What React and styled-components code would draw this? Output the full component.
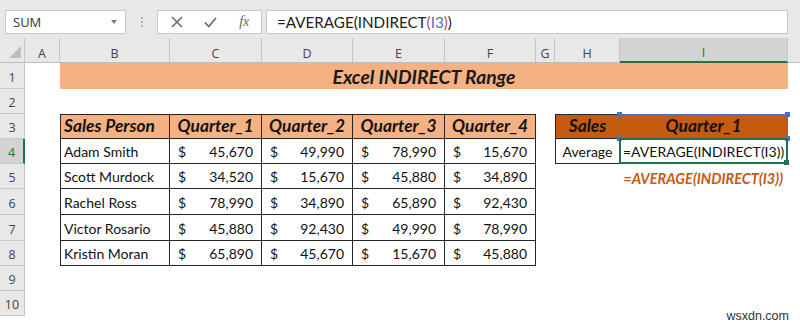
import React from "react";
import styled, { createGlobalStyle } from "styled-components";

const GlobalStyle = createGlobalStyle`
  html, body { margin: 0; padding: 0; background: #ffffff; }
  body { width: 800px; height: 327px; overflow: hidden; font-family: "Open Sans", "Noto Sans", sans-serif; }
  * { box-sizing: border-box; }
`;

const COLS = [25, 35, 110, 92, 91, 92, 91, 19, 65, 168];
const COL_NAMES = ["A", "B", "C", "D", "E", "F", "G", "H", "I"];
const ROWS = [25, 26, 25, 25, 25, 25, 26, 26, 25, 25, 25];

const Page = styled.div`
  position: relative;
  width: 800px;
  height: 327px;
  background: #e8e8e8;
  display: flex;
  flex-direction: column;
`;

const Toolbar = styled.div`
  height: 38px;
  display: flex;
  align-items: flex-start;
  padding: 10px 12px 0 5px;
  background: #e8e8e8;
`;

const Box = styled.div`
  height: 24px;
  background: #ffffff;
  border: 1px solid #c9c9c9;
  display: flex;
  align-items: center;
`;

const NameBox = styled(Box)`
  width: 121px;
  padding: 0 7px;
  justify-content: space-between;
  font-size: 13px;
  color: #333;
`;

const Caret = styled.span`
  width: 0;
  height: 0;
  border-left: 3px solid transparent;
  border-right: 3px solid transparent;
  border-top: 4px solid #777;
  margin-right: 1px;
`;

const Grip = styled.div`
  width: 31px;
  height: 24px;
  display: flex;
  flex-direction: column;
  align-items: center;
  justify-content: center;
  gap: 2px;
  span { width: 2px; height: 2px; background: #b3b3b3; }
`;

const ButtonsBox = styled(Box)`
  width: 105px;
  padding: 0 0 0 2px;
`;

const IconSlot = styled.div`
  width: 34px;
  display: flex;
  align-items: center;
  justify-content: center;
`;

const Fx = styled.span`
  font-family: "Liberation Serif", "DejaVu Serif", serif;
  font-style: italic;
  font-size: 14px;
  color: #666;
`;

const FormulaInput = styled(Box)`
  margin-left: 4px;
  flex: 1;
  padding-left: 10px;
  font-family: "Lato", "Open Sans", sans-serif;
  font-size: 15.2px;
  color: #222;
`;

const Paren = styled.span`color: #b84a5c;`;
const Ref = styled.span`color: #4472c4;`;

const Sheet = styled.div`
  flex: 1;
  display: grid;
  grid-template-columns: ${COLS.map((c) => c + "px").join(" ")} 1fr;
  grid-template-rows: ${ROWS.map((r) => r + "px").join(" ")} 1fr;
  background: #ffffff;
  font-family: "Lato", "Open Sans", sans-serif;
  font-size: 14px;
  color: #111;
`;

const Corner = styled.div`
  grid-column: 1;
  grid-row: 1;
  background: #e8e8e8;
  border-right: 1px solid #c6c6c6;
  border-bottom: 1px solid #bdbdbd;
  display: flex;
  align-items: flex-end;
  justify-content: flex-end;
  padding: 0 3px 4px 0;
`;

const ColHead = styled.div`
  grid-row: 1;
  grid-column: ${(p) => p.$col};
  background: ${(p) => (p.$active ? "#d3d3d3" : "#e8e8e8")};
  border-right: 1px solid #c6c6c6;
  border-bottom: ${(p) => (p.$active ? "2px solid #217346" : "1px solid #bdbdbd")};
  display: flex;
  align-items: center;
  justify-content: center;
  padding-top: 6px;
  font-family: "Open Sans", "Noto Sans", sans-serif;
  font-size: 12.5px;
  color: ${(p) => (p.$active ? "#217346" : "#444")};
`;

const HeadFill = styled.div`
  grid-row: 1;
  grid-column: 11;
  background: #e8e8e8;
  border-bottom: 1px solid #bdbdbd;
`;

const RowHead = styled.div`
  grid-column: 1;
  grid-row: ${(p) => p.$row};
  background: ${(p) => (p.$active ? "#d3d3d3" : "#e8e8e8")};
  border-right: ${(p) => (p.$active ? "2px solid #217346" : "1px solid #c6c6c6")};
  border-bottom: 1px solid #c6c6c6;
  display: flex;
  align-items: center;
  justify-content: center;
  padding-top: 3px;
  font-family: "Open Sans", "Noto Sans", sans-serif;
  font-size: 12.5px;
  color: ${(p) => (p.$active ? "#217346" : "#444")};
`;

const TitleBar = styled.div`
  grid-column: 3 / 11;
  grid-row: 2;
  background: #f4b183;
  display: flex;
  align-items: center;
  justify-content: center;
  padding-top: 1px;
  font-weight: 700;
  font-style: italic;
  font-size: 19.3px;
  color: #1a1a1a;
`;

const DataTable = styled.div`
  grid-column: ${(p) => p.$cols};
  grid-row: ${(p) => p.$rows};
  display: grid;
  grid-template-columns: ${(p) => p.$template};
  grid-template-rows: ${(p) => p.$rowTemplate};
`;

const Cell = styled.div`
  position: relative;
  border-right: 1px solid #262626;
  border-bottom: 1px solid #262626;
  border-left: ${(p) => (p.$first ? "1px solid #262626" : "none")};
  border-top: ${(p) => (p.$top ? "1px solid #262626" : "none")};
  background: ${(p) => p.$bg || "transparent"};
  display: flex;
  align-items: flex-end;
  justify-content: ${(p) => p.$align || "flex-start"};
  padding: 0 3px ${(p) => (p.$head ? "2px" : "3px")} 3px;
  font-weight: ${(p) => (p.$head ? 700 : 400)};
  font-style: ${(p) => (p.$head ? "italic" : "normal")};
  font-size: ${(p) => (p.$head ? "17.3px" : "14px")};
  white-space: nowrap;
`;

const Money = styled.div`
  flex: 1;
  display: flex;
  justify-content: space-between;
  padding: 0 5px 0 5px;
`;

const Highlight = styled.div`
  position: absolute;
  left: -1px;
  top: -1px;
  right: -1px;
  bottom: -1px;
  border: ${(p) => p.$w}px solid ${(p) => p.$color};
  pointer-events: none;
`;

const Handle = styled.span`
  position: absolute;
  width: 5px;
  height: 5px;
  background: ${(p) => p.$color};
  ${(p) => (p.$x === "l" ? "left: -3px;" : "right: -3px;")}
  ${(p) => (p.$y === "t" ? "top: -3px;" : "bottom: -3px;")}
`;

const Note = styled.div`
  grid-column: 10;
  grid-row: 6;
  display: flex;
  align-items: flex-end;
  justify-content: flex-end;
  padding: 0 5px 2px 0;
  font-weight: 700;
  font-style: italic;
  font-size: 14.5px;
  color: #c55a11;
  white-space: nowrap;
`;

const Watermark = styled.div`
  position: absolute;
  right: 11px;
  bottom: 4px;
  font-family: "Liberation Sans", Arial, sans-serif;
  font-size: 12.5px;
  color: #333;
`;

const people = [
  ["Adam Smith", 45670, 49990, 78990, 15670],
  ["Scott Murdock", 34520, 15670, 45880, 34890],
  ["Rachel Ross", 78990, 34890, 65890, 92430],
  ["Victor Rosario", 45880, 92430, 49990, 78990],
  ["Kristin Moran", 65890, 45670, 15670, 45880],
];

const fmt = (n) => n.toLocaleString("en-US");

export default function App() {
  return (
    <Page>
      <GlobalStyle />
      <Toolbar>
        <NameBox>
          <span>SUM</span>
          <Caret />
        </NameBox>
        <Grip>
          <span />
          <span />
          <span />
        </Grip>
        <ButtonsBox>
          <IconSlot>
            <svg width="12" height="12" viewBox="0 0 12 12">
              <path d="M1 1 L11 11 M11 1 L1 11" stroke="#6b6b6b" strokeWidth="1.6" />
            </svg>
          </IconSlot>
          <IconSlot>
            <svg width="13" height="11" viewBox="0 0 13 11">
              <path d="M1 5.5 L4.8 9.5 L12 1" stroke="#6b6b6b" strokeWidth="1.8" fill="none" />
            </svg>
          </IconSlot>
          <IconSlot>
            <Fx>fx</Fx>
          </IconSlot>
        </ButtonsBox>
        <FormulaInput>
          <span>
            =AVERAGE(INDIRECT<Paren>(</Paren>
            <Ref>I3</Ref>
            <Paren>)</Paren>)
          </span>
        </FormulaInput>
      </Toolbar>
      <Sheet>
        <Corner>
          <svg width="12" height="12" viewBox="0 0 12 12">
            <path d="M12 0 L12 12 L0 12 Z" fill="#bdbdbd" />
          </svg>
        </Corner>
        {COL_NAMES.map((n, i) => (
          <ColHead key={n} $col={i + 2} $active={n === "I"}>
            {n}
          </ColHead>
        ))}
        <HeadFill />
        {ROWS.slice(1).map((_, i) => (
          <RowHead key={i} $row={i + 2} $active={i + 1 === 4}>
            {i + 1}
          </RowHead>
        ))}
        <TitleBar>Excel INDIRECT Range</TitleBar>

        <DataTable
          $cols="3 / 8"
          $rows="4 / 10"
          $template="110px 92px 91px 92px 91px"
          $rowTemplate="25px 25px 25px 26px 26px 25px"
        >
          {["Sales Person", "Quarter_1", "Quarter_2", "Quarter_3", "Quarter_4"].map((h, i) => (
            <Cell key={h} $head $top $first={i === 0} $bg="#f4b183" $align={i === 0 ? "flex-start" : "center"}>
              {h}
            </Cell>
          ))}
          {people.map((row) =>
            row.map((v, i) =>
              i === 0 ? (
                <Cell key={row[0]} $first>
                  {v}
                </Cell>
              ) : (
                <Cell key={row[0] + i}>
                  <Money>
                    <span>$</span>
                    <span>{fmt(v)}</span>
                  </Money>
                </Cell>
              )
            )
          )}
        </DataTable>

        <DataTable $cols="9 / 11" $rows="4 / 6" $template="65px 168px" $rowTemplate="25px 25px">
          <Cell $head $top $first $bg="#c55a11" $align="center">
            Sales
          </Cell>
          <Cell $head $top $bg="#c55a11" $align="center">
            Quarter_1
            <Highlight $w={1.5} $color="#4472c4">
              <Handle $color="#4472c4" $x="l" $y="t" />
              <Handle $color="#4472c4" $x="r" $y="t" />
              <Handle $color="#4472c4" $x="l" $y="b" />
              <Handle $color="#4472c4" $x="r" $y="b" />
            </Highlight>
          </Cell>
          <Cell $first $align="center">
            Average
          </Cell>
          <Cell>
            =AVERAGE(INDIRECT(I3))
            <Highlight $w={2} $color="#217346">
              <Handle $color="#217346" $x="r" $y="b" />
            </Highlight>
          </Cell>
        </DataTable>

        <Note>=AVERAGE(INDIRECT(I3))</Note>
      </Sheet>
      <Watermark>wsxdn.com</Watermark>
    </Page>
  );
}
